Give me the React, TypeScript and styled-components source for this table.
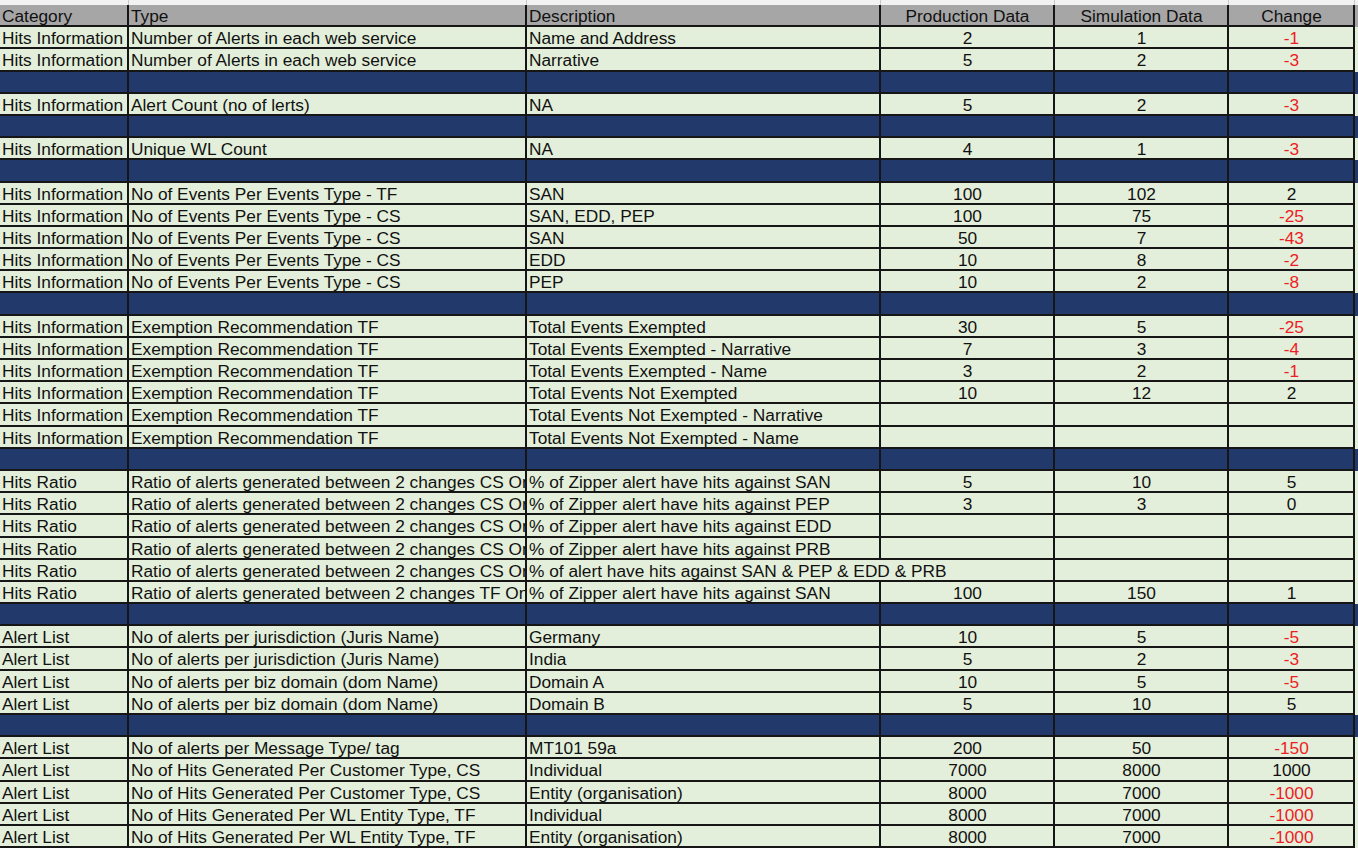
import React from 'react';
import styled, { createGlobalStyle } from 'styled-components';

const GlobalStyle = createGlobalStyle`
  html, body {
    margin: 0;
    padding: 0;
    background: #ffffff;
  }
  body {
    font-family: "Liberation Sans", Arial, sans-serif;
  }
`;

const COLS = '129px 398px 354px 174px 174px 126px';
const ROW_H = '22.2px';

const Sheet = styled.div`
  width: 1358px;
  display: flex;
  flex-direction: column;
`;

const TopStrip = styled.div`
  display: grid;
  grid-template-columns: ${COLS};
  height: 5px;
  background: #f2f2f2;
`;

const StripCell = styled.div`
  border-right: 1px solid #c9c9c9;
`;

const Row = styled.div<{ $kind: 'header' | 'data' | 'blank' }>`
  display: grid;
  grid-template-columns: ${COLS};
  height: ${ROW_H};
  background: ${(p) =>
    p.$kind === 'header' ? '#a6a6a6' : p.$kind === 'blank' ? '#21396b' : '#e3efda'};
`;

const Cell = styled.div<{ $align?: 'left' | 'center'; $red?: boolean; $span?: number }>`
  box-sizing: border-box;
  border-right: 2px solid #161616;
  border-bottom: 2px solid #161616;
  padding: 1px 1px 0 2px;
  font-size: 17.3px;
  line-height: 20px;
  color: ${(p) => (p.$red ? '#ee1c25' : '#111111')};
  text-align: ${(p) => p.$align || 'left'};
  white-space: nowrap;
  overflow: hidden;
  grid-column: ${(p) => (p.$span ? `span ${p.$span}` : 'auto')};
`;

type Line = [string, string, string, string, string, string] | null;

const rows: Line[] = [
  ['Hits Information', 'Number of Alerts in each web service', 'Name and Address', '2', '1', '-1'],
  ['Hits Information', 'Number of Alerts in each web service', 'Narrative', '5', '2', '-3'],
  null,
  ['Hits Information', 'Alert Count (no of lerts)', 'NA', '5', '2', '-3'],
  null,
  ['Hits Information', 'Unique WL Count', 'NA', '4', '1', '-3'],
  null,
  ['Hits Information', 'No of Events Per Events Type - TF', 'SAN', '100', '102', '2'],
  ['Hits Information', 'No of Events Per Events Type - CS', 'SAN, EDD, PEP', '100', '75', '-25'],
  ['Hits Information', 'No of Events Per Events Type - CS', 'SAN', '50', '7', '-43'],
  ['Hits Information', 'No of Events Per Events Type - CS', 'EDD', '10', '8', '-2'],
  ['Hits Information', 'No of Events Per Events Type - CS', 'PEP', '10', '2', '-8'],
  null,
  ['Hits Information', 'Exemption Recommendation TF', 'Total Events Exempted', '30', '5', '-25'],
  ['Hits Information', 'Exemption Recommendation TF', 'Total Events Exempted - Narrative', '7', '3', '-4'],
  ['Hits Information', 'Exemption Recommendation TF', 'Total Events Exempted - Name', '3', '2', '-1'],
  ['Hits Information', 'Exemption Recommendation TF', 'Total Events Not Exempted', '10', '12', '2'],
  ['Hits Information', 'Exemption Recommendation TF', 'Total Events Not Exempted - Narrative', '', '', ''],
  ['Hits Information', 'Exemption Recommendation TF', 'Total Events Not Exempted - Name', '', '', ''],
  null,
  ['Hits Ratio', 'Ratio of alerts generated between 2 changes CS Only', '% of Zipper alert have hits against SAN', '5', '10', '5'],
  ['Hits Ratio', 'Ratio of alerts generated between 2 changes CS Only', '% of Zipper alert have hits against PEP', '3', '3', '0'],
  ['Hits Ratio', 'Ratio of alerts generated between 2 changes CS Only', '% of Zipper alert have hits against EDD', '', '', ''],
  ['Hits Ratio', 'Ratio of alerts generated between 2 changes CS Only', '% of Zipper alert have hits against PRB', '', '', ''],
  ['Hits Ratio', 'Ratio of alerts generated between 2 changes CS Only', '% of alert have hits against SAN & PEP & EDD & PRB', '', '', ''],
  ['Hits Ratio', 'Ratio of alerts generated between 2 changes TF Only', '% of Zipper alert have hits against SAN', '100', '150', '1'],
  null,
  ['Alert List', 'No of alerts per jurisdiction (Juris Name)', 'Germany', '10', '5', '-5'],
  ['Alert List', 'No of alerts per jurisdiction (Juris Name)', 'India', '5', '2', '-3'],
  ['Alert List', 'No of alerts per biz domain (dom Name)', 'Domain A', '10', '5', '-5'],
  ['Alert List', 'No of alerts per biz domain (dom Name)', 'Domain B', '5', '10', '5'],
  null,
  ['Alert List', 'No of alerts per Message Type/ tag', 'MT101 59a', '200', '50', '-150'],
  ['Alert List', 'No of Hits Generated Per Customer Type, CS', 'Individual', '7000', '8000', '1000'],
  ['Alert List', 'No of Hits Generated Per Customer Type, CS', 'Entity (organisation)', '8000', '7000', '-1000'],
  ['Alert List', 'No of Hits Generated Per WL Entity Type, TF', 'Individual', '8000', '7000', '-1000'],
  ['Alert List', 'No of Hits Generated Per WL Entity Type, TF', 'Entity (organisation)', '8000', '7000', '-1000'],
];

const App: React.FC = () => {
  return (
    <>
      <GlobalStyle />
      <Sheet>
        <TopStrip>
          {[0, 1, 2, 3, 4, 5].map((i) => (
            <StripCell key={i} />
          ))}
        </TopStrip>
        <Row $kind="header">
          <Cell>Category</Cell>
          <Cell>Type</Cell>
          <Cell>Description</Cell>
          <Cell $align="center">Production Data</Cell>
          <Cell $align="center">Simulation Data</Cell>
          <Cell $align="center">Change</Cell>
        </Row>
        {rows.map((r, i) => {
          if (!r) {
            return (
              <Row key={i} $kind="blank">
                {[0, 1, 2, 3, 4, 5].map((c) => (
                  <Cell key={c} />
                ))}
              </Row>
            );
          }
          const [cat, type, desc, prod, sim, change] = r;
          // long description with empty production cell spills over like Excel does
          const spill = desc.length > 40 && prod === '';
          return (
            <Row key={i} $kind="data">
              <Cell>{cat}</Cell>
              <Cell>{type}</Cell>
              <Cell $span={spill ? 2 : undefined}>{desc}</Cell>
              {!spill && <Cell $align="center">{prod}</Cell>}
              <Cell $align="center">{sim}</Cell>
              <Cell $align="center" $red={change.startsWith('-')}>
                {change}
              </Cell>
            </Row>
          );
        })}
      </Sheet>
    </>
  );
};

export default App;
